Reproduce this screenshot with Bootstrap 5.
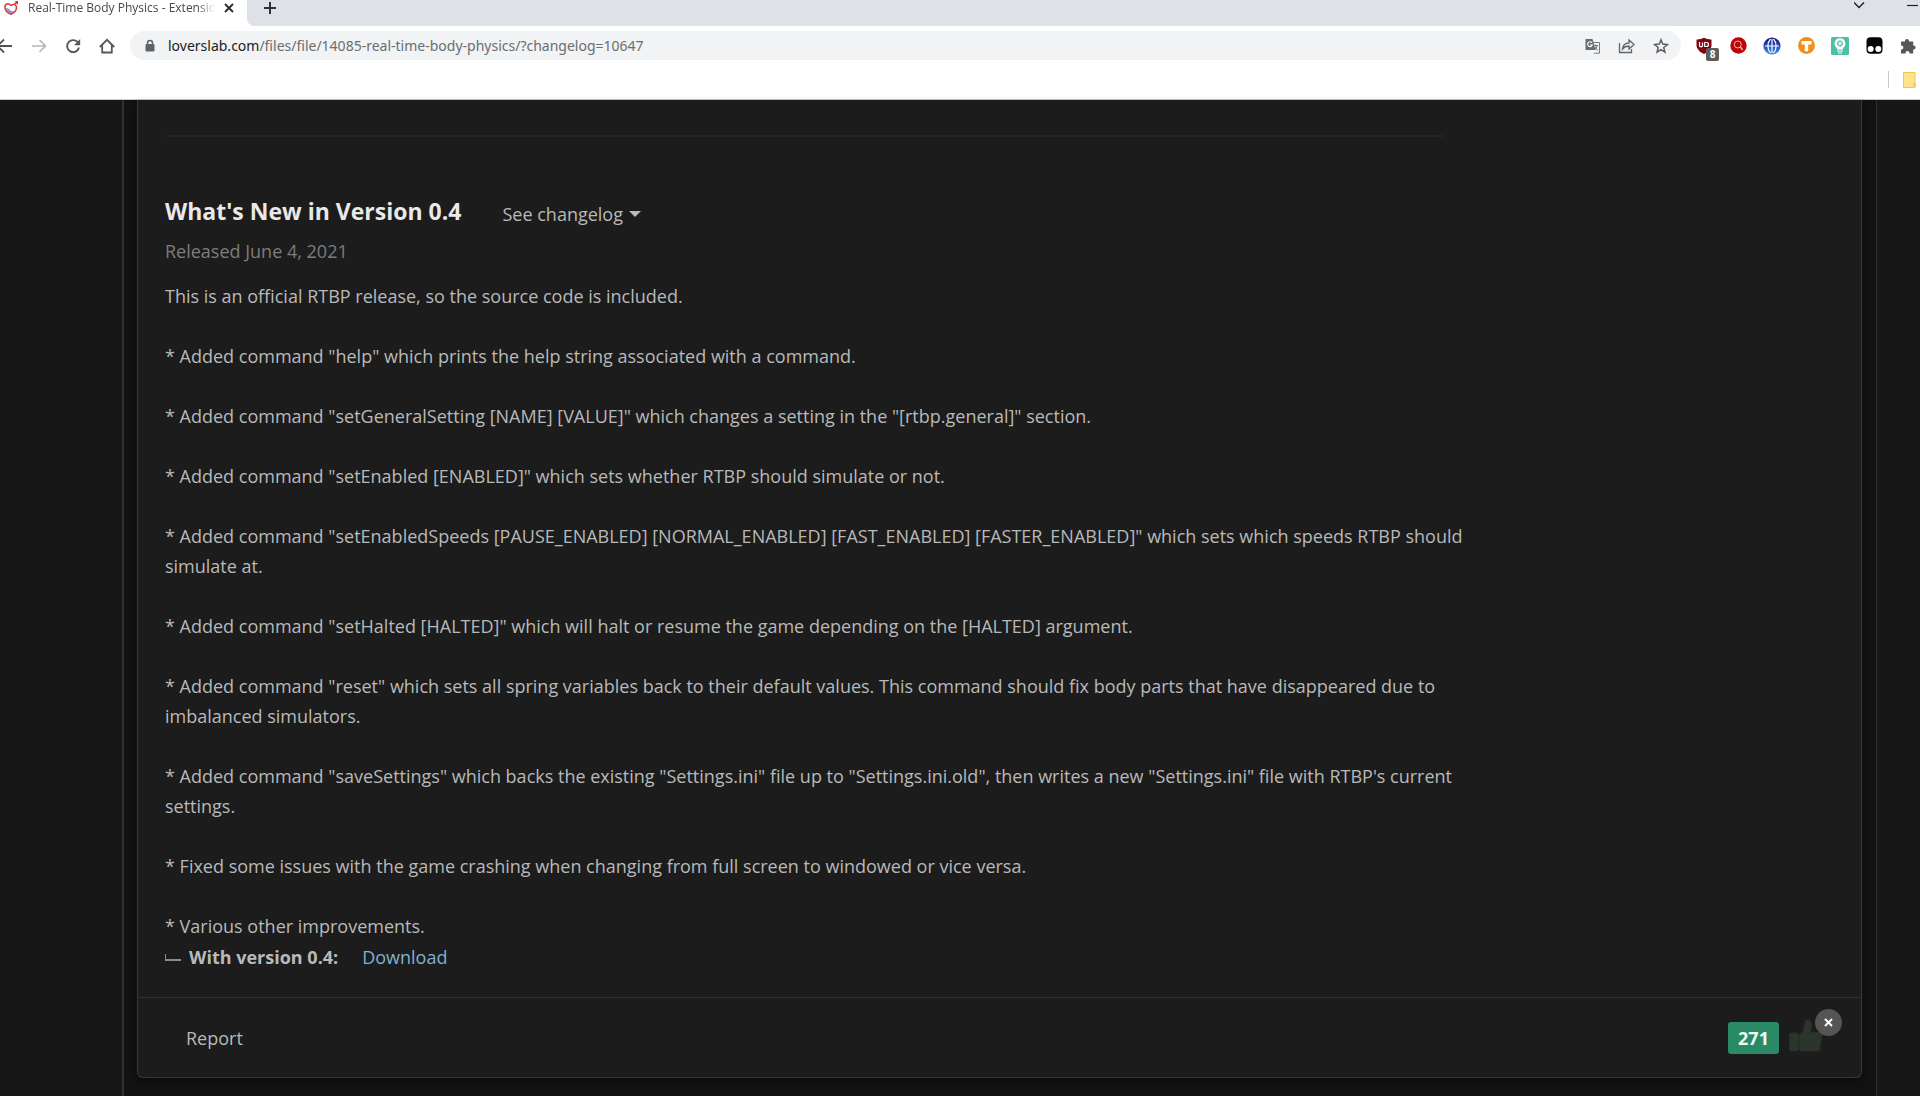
<!DOCTYPE html>
<html lang="en">
<head>
<meta charset="utf-8">
<meta name="viewport" content="width=device-width, initial-scale=1">
<title>Real-Time Body Physics - Extensions</title>
<link href="https://cdn.jsdelivr.net/npm/bootstrap@5.3.0/dist/css/bootstrap.min.css" rel="stylesheet">
<style>
body{background:#171717;color:#b9b9b9;font-family:"Open Sans","Noto Sans",sans-serif;font-size:18px;line-height:30px;overflow:hidden}
button{border:0;background:none;padding:0;color:inherit}
svg{display:block;flex:none}
.tabstrip{height:26px;background:#dee1e6;color:#202124}
.tab-active{width:247px;background:#fff}
.tab-title{font-size:12px;line-height:16px;width:187px;color:#45494d;-webkit-mask-image:linear-gradient(90deg,#000 170px,transparent);mask-image:linear-gradient(90deg,#000 170px,transparent)}
.strip-curve{width:8px;background:radial-gradient(circle at 100% 0,transparent 8px,#fff 8px) 0 18px/8px 8px no-repeat}
.toolbar{background:#fff;color:#5f6368;padding:5px 1px 0 0;gap:12px}
.tool{width:22px;height:29px;display:flex;align-items:center;justify-content:center;flex:none}
.tool-cut{width:16px}
.omnibox{height:29px;border-radius:15px;background:#f1f3f4;font-family:"Noto Sans",sans-serif;font-size:14px;line-height:29px;padding:0 9px 0 14px;gap:12px;min-width:0}
.omnibox .host{color:#202124}
.omnibox input{border:0;background:none;color:#6a6e72;padding:0;outline:0;min-width:0}
.ext-list{gap:12px}
.bookmarks{background:#fff;height:40px;border-bottom:1px solid #c9cdcc;gap:14px;padding-right:4px}
.bm-rule{width:1px;height:17px;background:#c8c8c8}
.ext-count{position:absolute;left:13px;top:17px;width:13px;height:13px;border-radius:2px;background:#5d5d5d;color:#fff;font:bold 10px/13px "Open Sans",sans-serif;text-align:center}
.wrapper{margin:0 43px 0 122px;padding:0 14px 0 13px;background:#121212;border:solid #303030;border-width:0 1px 0 2px;height:calc(100vh - 100px)}
.sheet{background:#1c1c1c;border:1px solid #383838;border-top:0;border-radius:0 0 6px 6px;box-shadow:0 4px 6px #0d0d0d}
.sheet-body{padding:35px 27px 24px;border-bottom:1px solid #303030}
.article{max-width:1279px}
.article hr{margin:0 0 58px;border-top:2px solid #242424;opacity:1}
.article h2{font-size:23px;line-height:32px;font-weight:700;color:#e9e9e9;margin:0 41px 0 0}
.released{color:#7d7d7d;line-height:30px;margin:7px 0 15px}
.notes p{margin:0 0 30px;white-space:nowrap}
.caret-down{border:6px solid transparent;border-top-color:#b9b9b9;border-bottom:0;margin-left:6px}
.with-version{line-height:32px}
.elbow{width:16px;height:7px;border:solid #8b8b8b;border-width:0 0 2px 1px}
.get-link{color:#7fb1d3;text-decoration:none;margin-left:24px}
.sheet-foot{height:79px;padding:0 19px 0 48px}
.sheet-foot a{color:#b9b9b9;text-decoration:none}
.score{width:51px;height:32px;border-radius:3px;background:#2b8a66;color:#eafaf2;font-weight:700;line-height:32px;text-align:center}
.react{width:55px;height:48px;margin-bottom:10px}
.react-clear{position:absolute;left:28px;top:0;width:27px;height:27px;border-radius:50%;background:#555;display:flex;align-items:center;justify-content:center}
</style>
</head>
<body>
<header>
  <div class="tabstrip d-flex">
    <div class="tab-active d-flex align-items-start">
      <svg width="20" height="16" viewBox="0 0 20 16" aria-hidden="true"><path d="M6 8q.5 5 5 6 3-.5 4.500-3-5 1-7-2.500z" fill="#7d9bea"/><path d="M11 5.500C8 2.500 4.500 4 5 7.800c.4 3.400 3 5.300 6 6.400 3-1.100 5.300-3 5.500-6.400.1-2-1-3.300-2.700-3.300-1.200 0-2 .4-2.800 1zM14 4.500L17.500 2" fill="none" stroke="#e0403d" stroke-width="1.600"/><path d="M15 1h3v4z" fill="#d5302c"/></svg>
      <span class="tab-title text-nowrap overflow-hidden ms-2">Real-Time Body Physics - Extensions</span>
      <button aria-label="Close tab" class="ms-2"><svg width="12" height="16" viewBox="0 0 12 16" stroke="#26292c" stroke-width="1.800"><path d="M2 4l8 8M10 4l-8 8"/></svg></button>
    </div>
    <div class="strip-curve"></div>
    <button aria-label="New tab" class="align-self-start ms-2"><svg width="14" height="16" viewBox="0 0 14 16" stroke="#303336" stroke-width="2"><path d="M7 2v12M1 8h12"/></svg></button>
    <div class="ms-auto d-flex align-items-start">
      <button aria-label="Search tabs" class="me-4"><svg width="12" height="12" viewBox="0 0 12 12" fill="none" stroke="#222" stroke-width="1.500"><path d="M0 2.500l5 5 5-5"/></svg></button>
      <button aria-label="Minimize" class="ms-3 me-0"><svg width="14" height="12" viewBox="0 0 14 12" stroke="#222" stroke-width="1.200"><path d="M1 5.500h11"/></svg></button>
    </div>
  </div>
  <div class="toolbar d-flex">
    <button class="tool tool-cut" aria-label="Back"><svg width="16" height="20" viewBox="0 0 16 20" fill="none" stroke="#505459" stroke-width="1.800"><path d="M12 10H-1M4 3.500L-2.500 10 4 16.500"/></svg></button>
    <button class="tool" aria-label="Forward"><svg width="16" height="16" viewBox="0 0 16 16" fill="none" stroke="#b4b6b9" stroke-width="1.600"><path d="M1 8h13M8.500 2l6 6-6 6"/></svg></button>
    <button class="tool" aria-label="Reload"><svg width="16" height="16" viewBox="0 0 16 16"><path d="M13.300 5A6 6 0 1 0 14 9.500" fill="none" stroke="#54585c" stroke-width="1.900"/><path d="M15.200 1v6.200H9z" fill="#54585c"/></svg></button>
    <button class="tool" aria-label="Home"><svg width="16" height="16" viewBox="0 0 16 16" fill="none" stroke="#54585c" stroke-width="1.800"><path d="M.8 9L8 1.800 15.200 9M3.200 7.500v7h9.600v-7"/></svg></button>
    <div class="omnibox d-flex flex-grow-1">
      <svg class="align-self-center" width="12" height="14" viewBox="0 0 12 14"><rect x="1.500" y="5" width="9" height="7.500" rx="1" fill="#5f6368"/><path d="M3.500 5.500V4a2.500 2.500 0 0 1 5 0v1.500" fill="none" stroke="#5f6368" stroke-width="1.500"/></svg>
      <label class="d-flex flex-grow-1"><span class="host">loverslab.com</span><input class="flex-grow-1" type="text" aria-label="Address" value="/files/file/14085-real-time-body-physics/?changelog=10647"></label>
      <button class="tool" aria-label="Translate"><svg width="16" height="16" viewBox="0 0 16 16"><path d="M7 4.500h7.500v10.700H9" fill="#f1f3f4" stroke="#777b80"/><path d="M.5 1h7l3 11h-10z" fill="#696d72"/><path d="M7 4.800A2.400 2.400 0 1 0 7.300 7H5" fill="none" stroke="#fff" stroke-width="1.100"/><path d="M8.500 7.500H13M10.700 6.500v1M12.300 7.500q-.8 3-3 4.500M10 9l2.700 3.500" fill="none" stroke="#696d72"/></svg></button>
      <button class="tool" aria-label="Share"><svg width="18" height="16" viewBox="0 0 18 16" fill="none" stroke="#62666a" stroke-width="1.300"><path d="M1.500 5v9.500h12V11M4.500 11c.5-4 3-6 6.500-6V2l5 4.500-5 4.500V8c-3 0-5 1-6.500 3z"/></svg></button>
      <button class="tool" aria-label="Bookmark"><svg width="16" height="16" viewBox="0 0 16 16" fill="none" stroke="#5b5f63" stroke-width="1.500"><path d="M8 1.800l1.700 4.300 4.700.4-3.600 3 1.100 4.600L8 11.700l-3.900 2.400 1.100-4.600-3.600-3 4.700-.4z"/></svg></button>
    </div>
    <div class="ext-list d-flex">
      <button class="tool position-relative" aria-label="Ad blocker, 8 blocked"><svg width="16" height="18" viewBox="0 0 16 18"><path d="M8 .8q4 2 7.500 1.700V9q-1 5-7.500 8Q1.500 14 .5 9V2.500Q4 2.800 8 .8z" fill="#800610"/><path d="M3.500 5v3.500q0 1.300 1.500 1.300t1.500-1.300V5.500M8.700 5.500v4h1.600q2.200 0 2.200-2t-2.200-2z" fill="none" stroke="#fff" stroke-width="1.200"/></svg><span class="ext-count">8</span></button>
      <button class="tool" aria-label="Search extension"><svg width="17" height="17" viewBox="0 0 17 17"><circle cx="8.500" cy="8.500" r="8.200" fill="#bd0606"/><circle cx="7.800" cy="7.500" r="3.500" fill="none" stroke="#f5b5b5"/><path d="M10.300 10l2.500 3" stroke="#f5b5b5" stroke-width="1.300"/></svg></button>
      <button class="tool" aria-label="Proxy extension"><svg width="18" height="18" viewBox="0 0 18 18"><defs><linearGradient id="globe" x2="0" y2="1"><stop stop-color="#120a78"/><stop offset="1" stop-color="#3d92f5"/></linearGradient></defs><circle cx="9" cy="9" r="8.600" fill="url(#globe)"/><path d="M9 2v14M2 9h14M7.500 2C4 6 4 12 7.500 16M10.500 2c3.500 4 3.500 10 0 14" fill="none" stroke="#fff" stroke-width="1.200"/></svg></button>
      <button class="tool" aria-label="Text extension"><svg width="17" height="17" viewBox="0 0 17 17"><circle cx="8.500" cy="8.500" r="8.400" fill="#ef8f1f"/><path d="M3.500 4h10v3.500h-3.300v6.700H6.800V7.500H3.500z" fill="#fff"/></svg></button>
      <button class="tool" aria-label="Ideas extension"><svg width="18" height="18" viewBox="0 0 18 18"><rect width="18" height="18" rx="1.500" fill="#4cbfa6"/><path d="M9 1.200a5.300 5.300 0 0 0-3 9.700V12.500h6v-1.600a5.300 5.300 0 0 0-3-9.700zM6 13.500h6v1H6zM7 15.500h4v1H7z" fill="#fff"/><circle cx="9" cy="6.500" r="2.300" fill="none" stroke="#4cbfa6" stroke-width="1.800" stroke-dasharray="1.400 .4"/></svg></button>
      <button class="tool" aria-label="Script extension"><svg width="17" height="17" viewBox="0 0 17 17"><rect x=".5" y=".3" width="16" height="16.400" rx="4" fill="#050505"/><circle cx="4.700" cy="12" r="3" fill="#fff"/><circle cx="12.300" cy="12" r="3" fill="#fff"/></svg></button>
      <button class="tool" aria-label="Extensions"><svg width="16" height="16" viewBox="0 0 16 16" fill="#54575c"><path d="M1 3.500h4V3a2 2 0 0 1 4 0v.5h4.200V7.400h.4a2 2 0 0 1 0 4h-.4v4.100H9.500V15a2 2 0 0 0-4 0v.5H1v-4h.4a2 2 0 0 0 0-4H1z"/></svg></button>
    </div>
  </div>
  <div class="bookmarks d-flex align-items-center justify-content-end">
    <span class="bm-rule"></span>
    <button aria-label="Other bookmarks"><svg width="13" height="16" viewBox="0 0 13 16"><path d="M.5.500H12V15.500H.5z" fill="#ffe28c" stroke="#eec94e"/><path d="M10 11h3v4h-3z" fill="#f6cf55"/></svg></button>
  </div>
</header>

<div class="wrapper">
  <main class="sheet">
    <div class="sheet-body">
      <div class="article">
        <hr>
        <div class="d-flex">
          <h2>What's New in Version 0.4</h2>
          <button class="d-flex align-items-center pt-1">See changelog<span class="caret-down"></span></button>
        </div>
        <div class="released">Released June 4, 2021</div>
        <div class="notes">
          <p>This is an official RTBP release, so the source code is included.</p>
          <p>* Added command "help" which prints the help string associated with a command.</p>
          <p>* Added command "setGeneralSetting [NAME] [VALUE]" which changes a setting in the "[rtbp.general]" section.</p>
          <p>* Added command "setEnabled [ENABLED]" which sets whether RTBP should simulate or not.</p>
          <p>* Added command "setEnabledSpeeds [PAUSE_ENABLED] [NORMAL_ENABLED] [FAST_ENABLED] [FASTER_ENABLED]" which sets which speeds RTBP should<br>simulate at.</p>
          <p>* Added command "setHalted [HALTED]" which will halt or resume the game depending on the [HALTED] argument.</p>
          <p>* Added command "reset" which sets all spring variables back to their default values. This command should fix body parts that have disappeared due to<br>imbalanced simulators.</p>
          <p>* Added command "saveSettings" which backs the existing "Settings.ini" file up to "Settings.ini.old", then writes a new "Settings.ini" file with RTBP's current<br>settings.</p>
          <p>* Fixed some issues with the game crashing when changing from full screen to windowed or vice versa.</p>
          <p class="mb-0">* Various other improvements.</p>
        </div>
        <div class="with-version d-flex align-items-center">
          <span class="elbow"></span><strong class="ms-2">With version 0.4:</strong><a class="get-link" href="#">Download</a>
        </div>
      </div>
    </div>
    <footer class="sheet-foot d-flex align-items-center">
      <a href="#">Report</a>
      <span class="score ms-auto me-2">271</span>
      <div class="react position-relative">
        <button aria-label="Like"><svg width="38" height="48" viewBox="0 0 38 48"><g fill="#2b352b" stroke="#243026"><rect x="2.500" y="24" width="9" height="18" rx="2"/><path d="M12.500 26q5-4 5-11 0-4 3-4 4 0 4 5 0 4-1.500 7.500h9q3 0 3 3 0 1.500-1 2.200 1.500 2.800-.4 4.500 1.200 2.600-.8 4.200Q34 42 31 42H15q-2.500 0-2.500-2z"/></g></svg></button>
        <button class="react-clear" aria-label="Remove reaction"><svg width="9" height="9" viewBox="0 0 9 9" stroke="#fff" stroke-width="2"><path d="M1 1l7 7M8 1L1 8"/></svg></button>
      </div>
    </footer>
  </main>
</div>
<script src="https://cdn.jsdelivr.net/npm/bootstrap@5.3.0/dist/js/bootstrap.bundle.min.js"></script>
</body>
</html>
